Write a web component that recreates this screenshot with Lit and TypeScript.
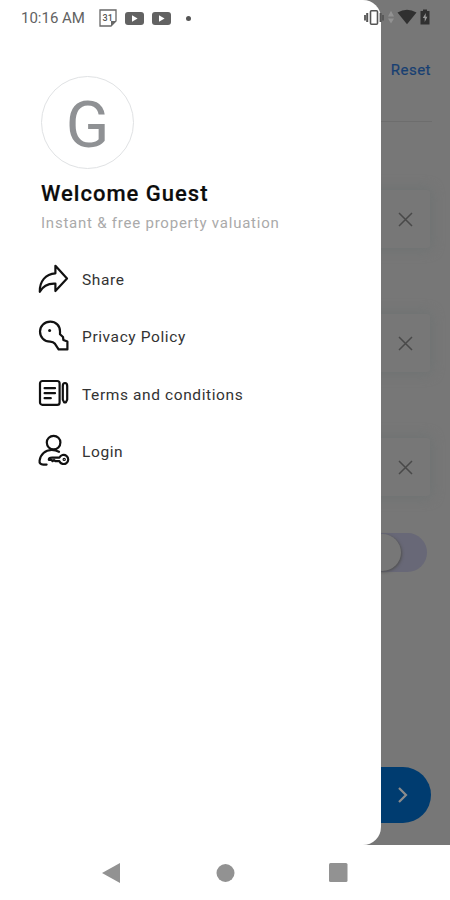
import { LitElement, html, css, svg } from "lit";
import { customElement } from "lit/decorators.js";

const icons = {
  share: svg`<path d="M17.4 1.8 29 14.6 17.4 27V19.6C10.3 19.2 5.4 21 1.8 27.8 1.4 17.4 7.6 9.8 17.4 9.3Z"/>`,
  privacy: svg`<path d="M12.2.6C17.9.6 22 4.8 22 10.2V13.2L25 16 25.4 19 29.4 20.6V28.4H20.6L17 22.8C15.6 21 14 20.6 12.2 20.6 6.2 20.6 2 16.2 2 10.6 2 5 6.6.6 12.2.6Z"/><circle cx="11.6" cy="9.6" r="1.5" fill="#111" stroke="none"/>`,
  terms: svg`<rect x="2" y="2" width="19.6" height="23.8" rx="2.4"/><path d="M6.6 9.2H17M6.6 14.2H17M6.6 19.2H12.8M24.8 7C24.8 5 25.8 4 27 4S29.2 5 29.2 7V20.6L27.9 23.4H26.1L24.8 20.6Z"/>`,
  login: svg`<circle cx="15.6" cy="6.6" r="6.8"/><path d="M8.6 28.6H5.2C2.6 28.6 1.2 27.2 1.6 24.6 2.4 18.4 7.2 14 13.6 14 16.4 14 18.8 14.6 21 15.8"/><path d="M21.4 21.6H14.2C12.3 21.6 10.8 22.4 10.8 23.8H13.6L14.5 25.2 16 24 17.4 25.2H21.4A4.6 4.6 0 1 0 21.4 21.6Z"/><circle cx="26.2" cy="23.4" r=".6"/>`,
};

const menu = [
  { label: "Share", icon: icons.share },
  { label: "Privacy Policy", icon: icons.privacy },
  { label: "Terms and conditions", icon: icons.terms },
  { label: "Login", icon: icons.login },
];

const video = html`<svg class="video" width="19" height="13" viewBox="0 0 19 13"><rect width="19" height="13" rx="3" fill="#626262"/><path d="M7 3.2 12.6 6.5 7 9.8Z" fill="#fff"/></svg>`;

@customElement("app-root")
export class AppRoot extends LitElement {
  static styles = css`
    :host { display: block; position: relative; width: 450px; height: 900px; overflow: hidden; background: #fff; font-family: Roboto, sans-serif; }
    * { box-sizing: border-box; }
    svg { display: block; fill: none; flex: none; overflow: visible; }
    .shell { display: flex; flex-direction: column; height: 900px; }
    .page { height: 845px; background: #777; display: flex; flex-direction: column; align-items: flex-end; padding: 60px 20px 0 0; }
    .reset { font-size: 15px; line-height: 20px; color: #173f72; letter-spacing: .5px; margin-right: -1px; -webkit-text-stroke: .2px #173f72; }
    .rule { width: 400px; height: 1px; margin: 41px -2px 68px 0; background: #6d6d6d; }
    .field { width: 400px; height: 58px; margin-bottom: 66px; border-radius: 3px; background: #777; box-shadow: 0 0 12px 2px #6f7373; display: flex; align-items: center; justify-content: flex-end; padding-right: 17px; }
    .last { margin-bottom: 37px; }
    .toggle { width: 78px; height: 39px; margin-right: 3px; border-radius: 20px; background: #686877; display: flex; align-items: center; padding-left: 15px; }
    .knob { width: 37px; height: 37px; border-radius: 50%; background: #777; box-shadow: 1px 1px 3px #505050; }
    .next { width: 160px; height: 56px; margin: 195px -1px 0 0; border-radius: 28px; background: #003c70; display: flex; align-items: center; justify-content: flex-end; padding-right: 23px; }
    .nav { height: 55px; display: flex; justify-content: space-between; align-items: center; padding: 0 102px 0 102px; }
    .drawer { position: absolute; left: 0; top: 0; width: 380.5px; height: 845px; border-radius: 0 18px 18px 0; background: #fff; padding: 76px 0 0 41px; }
    .avatar { width: 93px; height: 93px; border: 1px solid #e0e2e4; border-radius: 50%; display: flex; justify-content: center; align-items: center; color: #8f9194; font-size: 64px; line-height: 93px; padding-top: 6px; }
    .name { margin-top: 12px; font-size: 22px; line-height: 26px; font-weight: 500; letter-spacing: 1px; color: #0c0c0c; -webkit-text-stroke: .2px #0c0c0c; white-space: nowrap; }
    .tag { margin-top: 6px; font-size: 15px; line-height: 20px; letter-spacing: .77px; color: #aaa; white-space: nowrap; }
    .menu { margin: 18px 0 0 -3px; display: flex; flex-direction: column; }
    .item { height: 57.5px; display: flex; align-items: center; gap: 12px; font-size: 15.5px; letter-spacing: .6px; color: #333; white-space: nowrap; }
    .glyph { stroke: #111; stroke-width: 2.2; stroke-linejoin: round; stroke-linecap: round; }
    .status { position: absolute; left: 0; top: 0; width: 450px; height: 36px; padding: 0 20px 0 21px; display: flex; align-items: center; color: #626262; font-size: 15px; }
    .time { width: 78px; white-space: nowrap; }
    .video { margin-left: 8px; }
    .dot { width: 5px; height: 5px; margin-left: 15px; border-radius: 50%; background: #555; }
    .signals { margin-left: auto; }
  `;

  private clear() {
    return html`<svg width="15" height="15" viewBox="0 0 15 15" stroke="#494949" stroke-width="1.5"><path d="m1 1 13 13M14 1 1 14"/></svg>`;
  }

  render() {
    return html`
      <div class="shell">
        <main class="page">
          <div class="reset">Reset</div>
          <div class="rule"></div>
          <div class="field">${this.clear()}</div>
          <div class="field">${this.clear()}</div>
          <div class="field last">${this.clear()}</div>
          <div class="toggle"><div class="knob"></div></div>
          <div class="next"><svg width="10" height="16" viewBox="0 0 10 16" stroke="#8c8c8c" stroke-width="2.2"><path d="m1 1 7 7-7 7"/></svg></div>
        </main>
        <nav class="nav">
          <svg width="18" height="20" viewBox="0 0 18 20"><path d="M0 10 18 0V20Z" fill="#929292"/></svg>
          <svg width="18" height="18" viewBox="0 0 18 18"><circle cx="9.5" cy="9" r="9" fill="#929292"/></svg>
          <svg width="19" height="19" viewBox="0 0 19 19"><rect width="18.5" height="19" rx="1.5" fill="#929292"/></svg>
        </nav>
      </div>
      <aside class="drawer">
        <div class="avatar">G</div>
        <div class="name">Welcome Guest</div>
        <div class="tag">Instant &amp; free property valuation</div>
        <div class="menu">
          ${menu.map((m) => html`<div class="item"><svg class="glyph" width="32" height="32" viewBox="0 0 32 32">${m.icon}</svg><span>${m.label}</span></div>`)}
        </div>
      </aside>
      <header class="status">
        <span class="time">10:16 AM</span>
        <svg width="18" height="18" viewBox="0 0 18 18"><path d="M1 1H17V12L12 17H1Z" stroke="#686868" stroke-width="1.3"/><path d="M12 17V12H17Z" fill="#686868"/><text x="8.7" y="11.8" text-anchor="middle" font-size="9" font-weight="500" fill="#555">31</text></svg>
        ${video}${video}
        <span class="dot"></span>
        <svg class="signals" width="67" height="18" viewBox="0 0 67 18">
          <rect x="7.5" y="1.8" width="7" height="13.5" rx="1" stroke="#555" stroke-width="1.6"/>
          <path d="M4.2 4V13M17.6 4V13" stroke="#555" stroke-width="2"/><path d="M2 6V11.5M20 6V11.5" stroke="#555" stroke-width="1.8"/>
          <path d="M25 7.5 28 1.8 31 7.5ZM25 9.5 28 14.5 31 9.5Z" fill="#929292"/>
          <path d="M34.5 3.5Q44-2 53.5 3.5L44 15.2Z" fill="#303030"/>
          <path d="M57.5 2H60V.5H64V2H66.5V15.5H57.5Z" fill="#303030"/><path d="M62.8 4 59.8 9H61.7V13L64.4 7.8H62.6Z" fill="#999"/>
        </svg>
      </header>
    `;
  }
}
